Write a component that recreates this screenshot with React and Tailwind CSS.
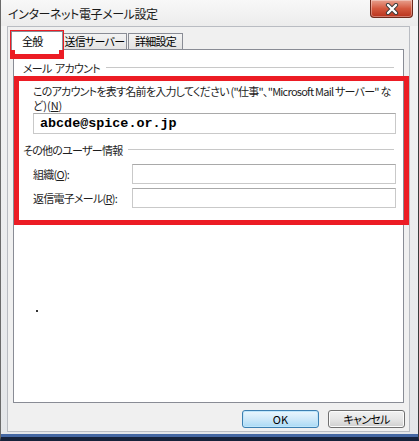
import React from "react";

const jp = "font-['Meiryo_UI','Noto_Sans_CJK_JP',sans-serif]";

function CloseButton() {
  return (
    <div className="mr-[5px] w-[43px] h-[18px] rounded-b-[4px] border border-t-0 border-[#6e2a1c] bg-gradient-to-b from-[#e7a08e] via-[#d4593f] to-[#b8321c] shadow-[inset_0_0_0_1px_rgba(255,255,255,0.35)] flex items-center justify-center">
      <svg width="16" height="12" viewBox="0 0 16 12">
        <path d="M4 2 L12 10 M12 2 L4 10" stroke="#3a3a3a" strokeWidth="4.2" strokeLinecap="round" />
        <path d="M4 2 L12 10 M12 2 L4 10" stroke="#ffffff" strokeWidth="2.4" strokeLinecap="round" />
      </svg>
    </div>
  );
}

function GroupHeader({ children }) {
  return (
    <div className="flex items-center h-[14px]">
      <span className="whitespace-nowrap text-[#1e1e1e]">{children}</span>
      <div className="flex-1 ml-[6px] mr-[2px] h-[2px] border-t border-[#c8c8c8] border-b border-b-white" />
    </div>
  );
}

function TextBox({ className = "", children }) {
  return (
    <div className={"border border-[#c9c9c9] border-t-[#a9a9a9] bg-white flex items-center " + className}>
      {children}
    </div>
  );
}

export default function App() {
  return (
    <div
      className={
        "relative w-[419px] h-[441px] overflow-hidden flex flex-col bg-gradient-to-b from-[#f4f4f4] to-[#e4e6e9] border-l border-r border-b-[4px] border-l-[#6a6a6a] border-r-[#3a3a3a] border-b-[#16223a] shadow-[inset_0_-3px_0_0_#4467a3] text-[11px] leading-[13px] tracking-[-0.75px] text-black [font-feature-settings:'palt'] " +
        jp
      }
    >
      {/* Title bar */}
      <div className="h-[26px] flex items-start shrink-0 bg-gradient-to-b from-[#f8f8f8] to-[#ececec]">
        <div className="pl-[7px] pt-[6px] text-[12px] leading-[15px] tracking-[-0.4px] text-[#1a1a1a] whitespace-nowrap">インターネット電子メール設定</div>
        <div className="ml-auto">
          <CloseButton />
        </div>
      </div>

      {/* Client area */}
      <div className="ml-[6px] mr-[8px] mb-[5px] flex-1 bg-[#f0f0f0] border border-[#b9bcc2] flex flex-col">
        {/* Tabs */}
        <div className="h-[22px] pl-[5px] flex items-end shrink-0">
          <div className="relative z-10 -ml-[2px] w-[52px] h-[19px] -mb-px bg-white border border-b-0 border-[#898c95] flex items-center pl-[10px] whitespace-nowrap">
            全般
          </div>
          <div className="w-[64px] h-[16px] bg-gradient-to-b from-[#f3f3f3] to-[#e3e3e3] border border-b-0 border-l-0 border-[#898c95] flex items-center justify-center whitespace-nowrap">
            送信サーバー
          </div>
          <div className="ml-[1px] w-[55px] h-[16px] bg-gradient-to-b from-[#f3f3f3] to-[#e3e3e3] border border-b-0 border-[#898c95] flex items-center justify-center whitespace-nowrap">
            詳細設定
          </div>
        </div>

        {/* Panel */}
        <div className="relative mx-[5px] h-[354px] bg-white border border-[#898c95] pl-[9px] pr-[7px] pt-[11px] shrink-0">
          <GroupHeader>メール&nbsp;&nbsp;アカウント</GroupHeader>
          <div className="pl-[10px]">
            <div className="mt-[9px] leading-[14px] text-[#1e1e1e] whitespace-nowrap">
              <div>このアカウントを表す名前を入力してください ("仕事"、"Microsoft Mail サーバー" な</div>
              <div className="tracking-[0px]">
                ど)(<span className="underline">N</span>)
              </div>
            </div>
            <TextBox className="mt-[1px] h-[21px] pl-[6px]">
              <span className="font-['Liberation_Mono',monospace] font-bold text-[13.4px] tracking-[0px] text-black">
                abcde@spice.or.jp
              </span>
            </TextBox>
          </div>
          <div className="mt-[9px]">
            <GroupHeader>その他のユーザー情報</GroupHeader>
          </div>
          <div className="pl-[10px]">
            <div className="mt-[7px] flex items-center">
              <div className="w-[99px] text-[#1e1e1e] whitespace-nowrap">
                組織(<span className="underline">O</span>):
              </div>
              <TextBox className="flex-1 h-[20px]" />
            </div>
            <div className="mt-[4px] flex items-center">
              <div className="w-[99px] text-[#1e1e1e] whitespace-nowrap">
                返信電子メール(<span className="underline">R</span>):
              </div>
              <TextBox className="flex-1 h-[20px]" />
            </div>
          </div>
          <span className="absolute left-[22px] top-[260px] w-[2px] h-[2px] bg-[#333]" />
        </div>

        {/* Buttons */}
        <div className="flex justify-end gap-[9px] pr-[4px] mt-[7px]">
          <div className="w-[77px] h-[18px] rounded-[3px] border border-[#3c7fb1] bg-gradient-to-b from-[#eaf6fd] via-[#cfe9f9] to-[#a9daf5] shadow-[inset_0_0_0_1px_#bfe6fb] flex items-center justify-center tracking-[0px]">
            OK
          </div>
          <div className="w-[77px] h-[18px] rounded-[3px] border border-[#707070] bg-gradient-to-b from-[#f2f2f2] via-[#e6e6e6] to-[#cfcfcf] shadow-[inset_0_0_0_1px_#fbfbfb] flex items-center justify-center">
            キャンセル
          </div>
        </div>
      </div>

      {/* Red annotation boxes */}
      <div className="absolute left-[9px] top-[30px] w-[54px] h-[29px] border-[5px] border-[#ec1c24] pointer-events-none" />
      <div className="absolute left-[13px] top-[76px] w-[395px] h-[149px] border-[5px] border-[#ec1c24] pointer-events-none" />
    </div>
  );
}
